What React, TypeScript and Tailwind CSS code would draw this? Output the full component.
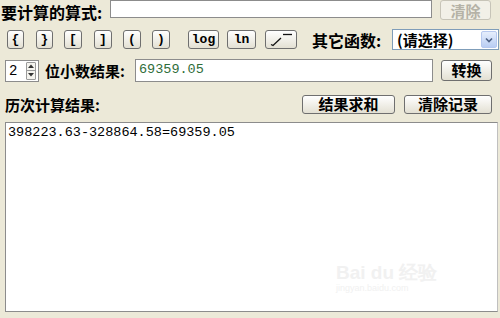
import React from 'react';

const cjk = { fontFamily: '"Noto Sans CJK SC", "Noto Sans", sans-serif' };
const mono = { fontFamily: '"Liberation Mono", "DejaVu Sans Mono", monospace' };

const btn =
  'flex items-center justify-center border border-[#6f6f6f] rounded-[3px] bg-gradient-to-b from-white to-[#e3e0d3] text-black';

function KeyButton({ label, w }: { label: string; w: string }) {
  return (
    <button className={`${btn} h-[19px] ${w} text-[13px] font-bold`} style={mono}>
      {label}
    </button>
  );
}

function SqrtButton() {
  return (
    <button className={`${btn} h-[19px] w-[32px]`}>
      <svg width="26" height="15" viewBox="0 0 26 15">
        <path d="M3 12.5 L5 13.5 L13 6" stroke="#111" strokeWidth="1.3" fill="none" />
        <path d="M15 2.5 H24" stroke="#111" strokeWidth="1.3" fill="none" />
      </svg>
    </button>
  );
}

export default function App() {
  return (
    <div className="relative w-[500px] h-[318px] bg-[#ece9d8] overflow-hidden text-black" style={cjk}>
      {/* row 1 */}
      <div className="flex items-start h-[20px]">
        <span className="w-[110px] shrink-0 pl-[1px] pt-[4px] text-[16px] font-bold leading-[16px] whitespace-nowrap">要计算的算式:</span>
        <div className="w-[322px] h-[18px] bg-white border border-[#8c8c8c]" />
        <button className="ml-[8px] w-[51px] h-[20px] border border-[#c7c4b8] rounded-[3px] bg-[#f2f0e8] text-[#b5b2a6] text-[15px] font-bold leading-none">
          清除
        </button>
      </div>

      {/* row 2 */}
      <div className="flex items-center h-[21px] mt-[9px] pl-[7px]">
        <KeyButton label="{" w="w-[17px]" />
        <div className="ml-[12px]"><KeyButton label="}" w="w-[17px]" /></div>
        <div className="ml-[11px]"><KeyButton label="[" w="w-[18px]" /></div>
        <div className="ml-[12px]"><KeyButton label="]" w="w-[18px]" /></div>
        <div className="ml-[11px]"><KeyButton label="(" w="w-[18px]" /></div>
        <div className="ml-[11px]"><KeyButton label=")" w="w-[18px]" /></div>
        <div className="ml-[18px]"><KeyButton label="log" w="w-[31px]" /></div>
        <div className="ml-[8px]"><KeyButton label="ln" w="w-[29px]" /></div>
        <div className="ml-[9px]"><SqrtButton /></div>
        <span className="ml-[15px] w-[80px] shrink-0 text-[16px] font-bold leading-none whitespace-nowrap">其它函数:</span>
        <div className="w-[107px] h-[21px] bg-white border border-[#7f9db9] flex items-center">
          <span className="flex-1 pl-[4px] text-[15px] font-bold leading-none whitespace-nowrap">(请选择)</span>
          <div className="w-[16px] h-[17px] mr-[1px] rounded-[2px] bg-gradient-to-b from-[#e6eefc] to-[#b9cdf3] border border-[#b6c8ef] flex items-center justify-center">
            <svg width="8" height="6" viewBox="0 0 8 6">
              <path d="M1 1.5 L4 4.5 L7 1.5" stroke="#4d6185" strokeWidth="1.6" fill="none" />
            </svg>
          </div>
        </div>
      </div>

      {/* row 3 */}
      <div className="flex items-center h-[23px] mt-[9px] pl-[5px]">
        <div className="w-[34px] h-[22px] bg-white border border-[#8c8c8c] flex items-center">
          <span className="pl-[3px] flex-1 text-[14px] leading-none" style={mono}>2</span>
          <div className="w-[10px] h-[18px] mr-[2px] flex flex-col border border-[#9a9a9a] rounded-[1px] bg-[#f4f3ee]">
            <div className="flex-1 flex items-center justify-center border-b border-[#9a9a9a]">
              <svg width="6" height="4" viewBox="0 0 6 4"><path d="M0 4 L3 0.5 L6 4Z" fill="#333" /></svg>
            </div>
            <div className="flex-1 flex items-center justify-center">
              <svg width="6" height="4" viewBox="0 0 6 4"><path d="M0 0 L3 3.5 L6 0Z" fill="#333" /></svg>
            </div>
          </div>
        </div>
        <span className="ml-[6px] w-[90px] shrink-0 text-[15px] font-bold leading-none whitespace-nowrap">位小数结果:</span>
        <div className="w-[298px] h-[23px] bg-white border border-[#8c8c8c] flex items-center pl-[3px]">
          <span className="text-[13.5px] text-[#2f6d3a]" style={mono}>69359.05</span>
        </div>
        <button className={`${btn} ml-[8px] w-[51px] h-[21px] text-[15px] font-bold`}>转换</button>
      </div>

      {/* row 4 */}
      <div className="flex items-center h-[19px] mt-[13px]">
        <span className="pl-[5px] flex-1 text-[15px] font-bold leading-none whitespace-nowrap">历次计算结果:</span>
        <button className={`${btn} w-[93px] h-[19px] text-[15px] font-bold`}>结果求和</button>
        <button className={`${btn} ml-[9px] mr-[8px] w-[88px] h-[19px] text-[15px] font-bold`}>清除记录</button>
      </div>

      {/* history */}
      <div className="relative mt-[8px] ml-[5px] w-[493px] h-[190px] bg-white border border-[#8c8c8c] border-r-[#c0c0c0]">
        <div className="pl-[2px] pt-[1px] text-[13.5px] leading-[18px]" style={mono}>
          398223.63-328864.58=69359.05
        </div>
        <div className="absolute left-[330px] top-[140px] text-[#f1f1f1] leading-none">
          <div className="text-[19px] font-bold" style={{ fontFamily: '"Liberation Sans", sans-serif' }}>Bai du 经验</div>
          <div className="text-[9px] mt-[2px]" style={{ fontFamily: '"Liberation Sans", sans-serif' }}>jingyan.baidu.com</div>
        </div>
      </div>
    </div>
  );
}
